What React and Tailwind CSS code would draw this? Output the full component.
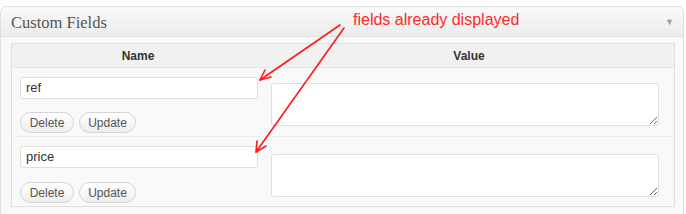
import React from 'react'

const fields = [
  { id: 1, name: 'ref', rowClass: 'h-[68px]', pad: 'pt-[7px]', gap: 'mt-[13px]', valuePad: 'pt-[15px]' },
  { id: 2, name: 'price', rowClass: 'h-[70px]', pad: 'pt-[7px]', gap: 'mt-[14px]', valuePad: 'pt-[17px]' },
]

const MetaButton = ({ children, width }) => (
  <button
    className={`h-[21px] ${width} rounded-full border border-[#d4d4d4] bg-gradient-to-b from-white to-[#eeeeee] text-[12px] leading-none text-[#555]`}
  >
    {children}
  </button>
)

export default function App() {
  return (
    <div className="relative h-[214px] w-[686px] overflow-hidden bg-white font-['Liberation_Sans',Arial,sans-serif]">
      {/* Custom Fields postbox */}
      <div className="mt-[6px] w-[684px] rounded-t-[6px] border border-[#dfdfdf] bg-[#f9f9f9] pb-[10px]">
        <div className="flex h-[30px] items-center justify-between rounded-t-[6px] border-b border-[#dfdfdf] bg-gradient-to-b from-[#f9f9f9] to-[#ececec] pl-[10px] pr-[9px]">
          <h3 className="pt-[3px] font-['Liberation_Serif',Georgia,serif] text-[16.5px] text-[#555]">Custom Fields</h3>
          <span className="pt-[2px] text-[9px] leading-none text-[#a0a0a0]">▼</span>
        </div>

        <div className="ml-[10px] mt-[6px] w-[664px] border border-[#dfdfdf] bg-[#f9f9f9]">
          <div className="flex h-[24px] items-center border-b border-[#e6e6e6] bg-[#f1f1f1] text-[12px] font-bold text-[#333]">
            <div className="w-[252px] text-center">Name</div>
            <div className="flex-1 text-center">Value</div>
          </div>

          {fields.map((field, i) => (
            <div
              key={field.id}
              className={`flex ${field.rowClass} ${i > 0 ? 'border-t border-[#efefef]' : ''}`}
            >
              <div className={`w-[252px] pl-[8px] ${field.pad}`}>
                <input
                  readOnly
                  value={field.name}
                  className="h-[22px] w-[238px] rounded-[3px] border border-[#dfdfdf] bg-white px-[5px] text-[13px] text-[#333] outline-none"
                />
                <div className={`${field.gap} flex gap-[5px]`}>
                  <MetaButton width="w-[54px]">Delete</MetaButton>
                  <MetaButton width="w-[57px]">Update</MetaButton>
                </div>
              </div>
              <div className={`flex-1 pl-[7px] ${field.valuePad}`}>
                <textarea
                  className="block h-[43px] w-[388px] rounded-[3px] border border-[#dfdfdf] bg-white outline-none"
                  defaultValue=""
                />
              </div>
            </div>
          ))}
        </div>
      </div>

      {/* annotation */}
      <div className="absolute left-[353px] top-[10px] text-[16px] leading-[20px] text-[#ff2a2a]">fields already displayed</div>
      <svg className="absolute left-0 top-0" width="686" height="214" viewBox="0 0 686 214">
        <g stroke="#ff1a1a" strokeWidth="1.6" fill="none" strokeLinecap="round">
          <path d="M340 25 L260 80" />
          <path d="M260 80 L271 77 M260 80 L265 70" />
          <path d="M344 28 L256 152" />
          <path d="M256 152 L266 146 M256 152 L257 141" />
        </g>
      </svg>
    </div>
  )
}
